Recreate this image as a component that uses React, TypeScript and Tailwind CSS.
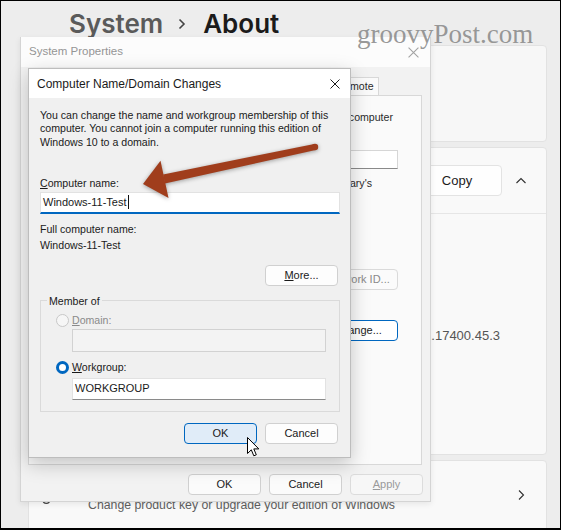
import React from 'react';

const sans = "font-['Liberation_Sans',Arial,sans-serif]";

function Cross({ size = 10, color = '#1a1a1a' }: { size?: number; color?: string }) {
  return (
    <svg width={size} height={size} viewBox="0 0 10 10" className="shrink-0">
      <path d="M0.5 0.5L9.5 9.5M9.5 0.5L0.5 9.5" stroke={color} strokeWidth="1" fill="none" />
    </svg>
  );
}

function Chevron({ dir }: { dir: 'up' | 'right' }) {
  return (
    <svg width="12" height="12" viewBox="0 0 12 12" className="shrink-0">
      {dir === 'up' ? (
        <path d="M1.5 8L6 3.5L10.5 8" stroke="#303030" strokeWidth="1.1" fill="none" />
      ) : (
        <path d="M4 1.5L8.5 6L4 10.5" stroke="#303030" strokeWidth="1.1" fill="none" />
      )}
    </svg>
  );
}

function Btn({
  children,
  className = '',
}: {
  children: React.ReactNode;
  className?: string;
}) {
  return (
    <div
      className={`flex h-[21px] w-[73px] items-center justify-center rounded-[4px] border text-[11px] leading-none ${className}`}
    >
      {children}
    </div>
  );
}

function SettingsPage() {
  return (
    <div className="flex h-[530px] flex-col bg-[#ededed] pl-[28px] pr-[14px]">
      <div className="flex h-[45px] shrink-0 items-start pl-[41px] pt-[11px] font-['Inter',sans-serif] text-[26px] font-semibold leading-[26px]">
        <span className="text-[#5a5a5a]">System</span>
        <svg width="10" height="12" viewBox="0 0 10 12" className="ml-[14px] mr-[16px] mt-[7px]">
          <path d="M2.5 1.5L7 6L2.5 10.5" stroke="#444" strokeWidth="1.6" fill="none" />
        </svg>
        <span className="text-[#1b1b1b]">About</span>
      </div>

      <div className="h-[97px] shrink-0 rounded-[4px] border border-[#e2e2e2] bg-[#f7f7f7]" />

      <div className="mt-[5px] flex h-[308px] shrink-0 flex-col rounded-[4px] border border-[#e2e2e2] bg-[#f9f9f9]">
        <div className="flex h-[66px] items-center justify-end border-b border-[#e6e6e6] pr-[19px]">
          <div className="flex h-[31px] w-[90px] items-center justify-center rounded-[4px] border border-[#e3e3e3] bg-[#fefefe] text-[13px] text-[#1b1b1b]">
            Copy
          </div>
          <div className="ml-[13px] flex w-[12px] justify-center">
            <Chevron dir="up" />
          </div>
        </div>
        <div className="flex justify-end pr-[46px] pt-[112px] text-[13px] text-[#555]">
          421.17400.45.3
        </div>
      </div>

      <div className="mt-[5px] flex h-[80px] shrink-0 items-start rounded-[4px] border border-[#e2e2e2] bg-[#f9f9f9] pl-[12px] pr-[19px]">
        <svg width="16" height="16" viewBox="0 0 24 24" className="mt-[29px] shrink-0">
          <circle cx="8" cy="15" r="5" stroke="#444" strokeWidth="1.8" fill="none" />
          <path d="M11.5 11.5L20 3M17 6l3 3" stroke="#444" strokeWidth="1.8" fill="none" />
        </svg>
        <span className="ml-[31px] mt-[37px] flex-1 text-[12.3px] leading-[15px] text-[#5f5f5f]">
          Change product key or upgrade your edition of Windows
        </span>
        <div className="mt-[28px]">
          <Chevron dir="right" />
        </div>
      </div>
    </div>
  );
}

function SystemProperties() {
  return (
    <div className="absolute left-[20px] top-[37px] flex h-[465px] w-[411px] flex-col border-x border-b border-[#d4d4d4] bg-[#f2f2f2] shadow-[0_2px_6px_rgba(0,0,0,0.08)]">
      <div className="flex h-[30px] shrink-0 items-center justify-between bg-[#fcfcfc] pl-[8px] pr-[11px]">
        <span className="text-[11.5px] text-[#959595]">System Properties</span>
        <Cross size={11} color="#a3a3a3" />
      </div>

      <div className="mt-[10px] flex h-[18px] shrink-0 pl-[310px]">
        <div className="flex w-[48px] items-center justify-center border-x border-t border-[#d8d8d8] bg-[#fafafa] text-[10.6px] text-[#2a2a2a]">
          Remote
        </div>
      </div>

      <div className="ml-[7px] flex h-[370px] w-[394px] shrink-0 flex-col items-end border border-[#d8d8d8] bg-[#fafafa] text-[10.6px] leading-[13px] text-[#2a2a2a]">
        <span className="mr-[28px] mt-[15px] whitespace-nowrap">computer</span>
        <div className="mr-[23px] mt-[26px] h-[19px] w-[200px] border border-[#d6d6d6] border-b-[#8a8a8a] bg-white" />
        <span className="mr-[49px] mt-[8px] whitespace-nowrap">Mary's</span>
        <Btn className="mr-[23px] mt-[79px] w-[80px] border-[#dadada] bg-[#fbfbfb] text-[#8a8a8a]">
          Network ID...
        </Btn>
        <Btn className="mr-[23px] mt-[30px] w-[80px] border-[#0067c0] bg-white text-[#1a1a1a]">
          Change...
        </Btn>
      </div>

      <div className="mt-[9px] flex justify-end gap-[8px] pr-[7px] text-[#1a1a1a]">
        <Btn className="border-[#d0d0d0] bg-[#fbfbfb]">OK</Btn>
        <Btn className="border-[#d0d0d0] bg-[#fbfbfb]">Cancel</Btn>
        <Btn className="border-[#dcdcdc] bg-[#f7f7f7] text-[#9a9a9a]">
          <span className="underline underline-offset-1">A</span>pply
        </Btn>
      </div>
    </div>
  );
}

function NameChanges() {
  return (
    <div className="absolute left-[28px] top-[68px] flex h-[390px] w-[323px] flex-col border border-[#bdbdbd] bg-[#f0f0f0] text-[10.6px] text-[#1a1a1a] shadow-[0_6px_18px_rgba(0,0,0,0.22)]">
      <div className="flex h-[29px] shrink-0 items-center justify-between bg-white pl-[8px] pr-[10px]">
        <span className="text-[12px]">Computer Name/Domain Changes</span>
        <Cross size={10} />
      </div>

      <div className="flex flex-col px-[11px] pt-[11px] leading-[13.3px]">
        <p>
          You can change the name and workgroup membership of this
          <br />
          computer. You cannot join a computer running this edition of
          <br />
          Windows 10 to a domain.
        </p>

        <span className="mt-[27px] leading-[14px]">
          <span className="underline underline-offset-1">C</span>omputer name:
        </span>
        <div className="mt-[2px] flex h-[22px] w-[300px] items-center border border-[#e2e2e2] border-b-2 border-b-[#0067c0] bg-white pl-[2px] text-[11px]">
          Windows-11-Test
          <span className="ml-[1px] h-[14px] w-px bg-[#111]" />
        </div>

        <span className="mt-[8px] leading-[14px]">Full computer name:</span>
        <span className="mt-[2px] leading-[14px]">Windows-11-Test</span>

        <div className="mt-[13px] flex w-[300px] justify-end pr-[2px]">
          <Btn className="w-[72px] border-[#d0d0d0] bg-[#fdfdfd]">
            <span className="underline underline-offset-1">M</span>ore...
          </Btn>
        </div>

        <fieldset className="mt-[8px] w-[300px] border border-[#dadada] pb-[11px]">
          <legend className="ml-[6px] px-[2px] leading-[14px]">Member of</legend>

          <div className="ml-[15px] mt-[6px] flex h-[14px] items-center">
            <span className="h-[13px] w-[13px] rounded-full border border-[#c8c8c8] bg-[#f6f6f6]" />
            <span className="ml-[3px] text-[#8a8a8a]">
              <span className="underline underline-offset-1">D</span>omain:
            </span>
          </div>
          <div className="ml-[31px] mt-[1px] h-[23px] w-[254px] border border-[#d2d2d2] bg-[#f3f3f3]" />

          <div className="ml-[15px] mt-[9px] flex h-[14px] items-center">
            <span className="h-[13px] w-[13px] rounded-full border-[3.5px] border-[#0067c0] bg-white" />
            <span className="ml-[3px]">
              <span className="underline underline-offset-1">W</span>orkgroup:
            </span>
          </div>
          <div className="ml-[31px] mt-[3px] flex h-[22px] w-[254px] items-center border border-[#e2e2e2] border-b-[#8a8a8a] bg-white pl-[2px] text-[11px]">
            WORKGROUP
          </div>
        </fieldset>

        <div className="mt-[11px] flex w-[300px] justify-end gap-[8px] pr-[2px]">
          <Btn className="border-[#0067c0] bg-[#e0ecf8]">OK</Btn>
          <Btn className="w-[72px] border-[#d0d0d0] bg-[#fdfdfd]">Cancel</Btn>
        </div>
      </div>
    </div>
  );
}

export default function App() {
  return (
    <div className={`relative h-[530px] w-[561px] overflow-hidden ${sans}`}>
      <SettingsPage />
      <SystemProperties />
      <NameChanges />

      {/* site watermark sits above both windows */}
      <span className="pointer-events-none absolute left-[357px] top-[21px] font-['Liberation_Serif',serif] text-[27px] leading-[27px] text-[#8b8b8b]/90">
        groovyPost.com
      </span>

      {/* callout arrow pointing at the name field */}
      <svg
        width="561"
        height="530"
        viewBox="0 0 561 530"
        className="pointer-events-none absolute left-0 top-0 drop-shadow-[0_1px_2px_rgba(0,0,0,0.35)]"
      >
        <g fill="#a03d1c">
          <polygon points="164.9,183.4 163.1,174.6 314.3,143.9 315.7,150.1" />
          <circle cx="315" cy="147" r="3.2" />
          <polygon points="143,184 160.5,160.8 168.5,198" />
        </g>
      </svg>

      {/* mouse pointer */}
      <svg width="13" height="21" viewBox="0 0 13 21" className="pointer-events-none absolute left-[247px] top-[437px]">
        <path
          d="M0.5 0.5V16.5L4.3 12.8L6.8 18.8L9.3 17.8L6.8 11.9H11.8Z"
          fill="#fff"
          stroke="#000"
          strokeWidth="1"
          strokeLinejoin="round"
        />
      </svg>

      <div className="pointer-events-none absolute inset-0 border-x border-t border-b-2 border-black" />
    </div>
  );
}
